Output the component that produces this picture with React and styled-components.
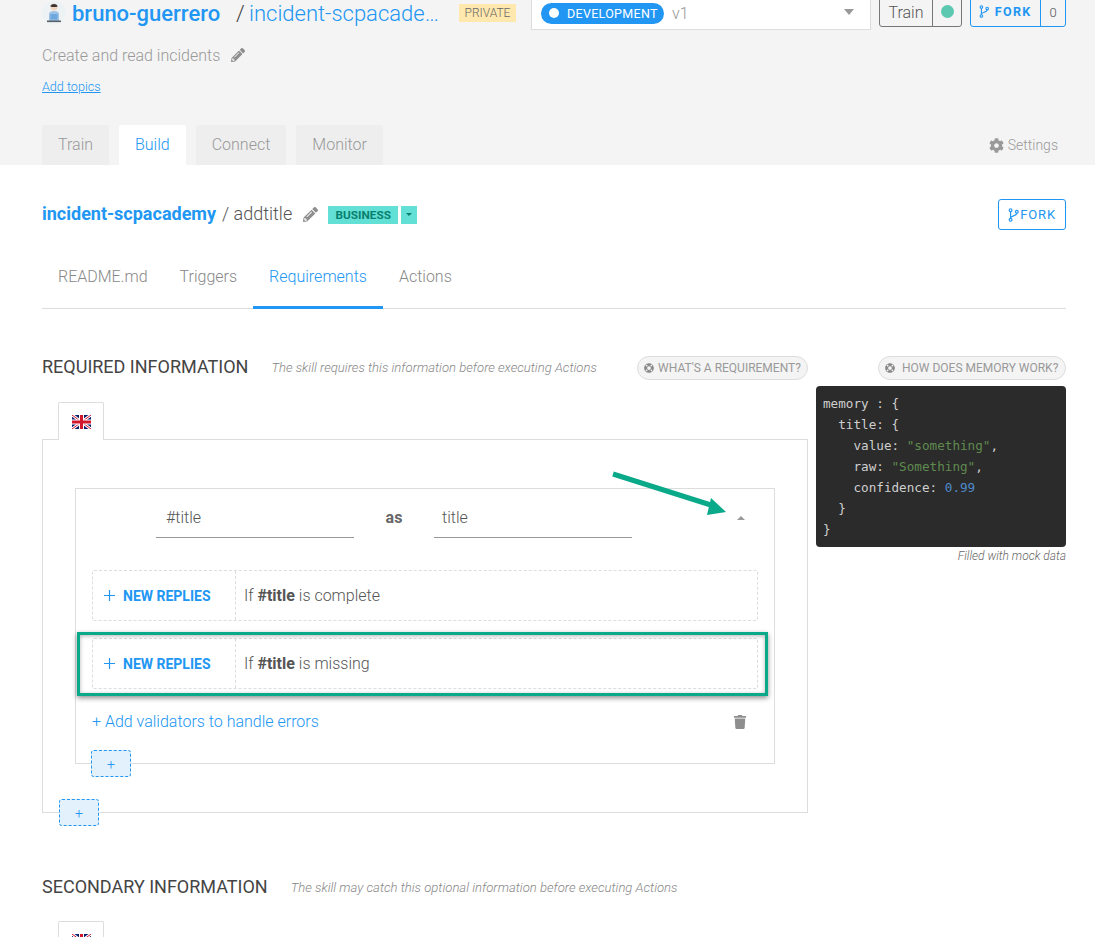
import React from 'react';
import styled, { createGlobalStyle } from 'styled-components';
import { FaCog, FaLifeRing, FaPencilAlt, FaTrash } from 'react-icons/fa';

const Global = createGlobalStyle`
  html, body { margin: 0; padding: 0; background: #fff; }
  * { box-sizing: border-box; }
  body { font-family: Roboto, "Noto Sans", sans-serif; color: #555; }
`;
const blue = '#2196f3';

const Page = styled.div`width: 1095px; height: 937px; overflow: hidden;`;
const Header = styled.header`
  height: 165px; background: #f4f4f4; padding: 0 29px 0 42px;
  display: flex; flex-direction: column;
`;
const TopRow = styled.div`display: flex; align-items: flex-start; height: 40px;`;
const Avatar = styled.svg`width: 24px; height: 24px; margin-top: 1px; margin-right: 6px; flex: none;`;
const Owner = styled.a`font-size: 22px; font-weight: 500; color: ${blue}; line-height: 27px; white-space: nowrap; width: 148px;`;
const Slash = styled.span`font-size: 22px; font-weight: 300; color: #444; line-height: 27px; margin: 0 7px 0 16px; width: 6px;`;
const Repo = styled.span`
  font-size: 22px; font-weight: 300; color: ${blue}; line-height: 27px;
  width: 198px; overflow: hidden; text-overflow: ellipsis; white-space: nowrap;
`;
const Private = styled.span`
  margin: 4px 0 0 12px; width: 57px; height: 18px; background: #ffe8ad; color: #666;
  font-size: 12px; font-weight: 300; display: flex; align-items: center; justify-content: center;
`;
const Select = styled.div`
  width: 340px; height: 41px; margin: -11px 0 0 15px; background: #fff; border: 1px solid #ddd;
  display: flex; align-items: center; padding: 7px 16px 0 9px; flex: none;
`;
const EnvPill = styled.span`
  height: 21px; width: 123px; background: ${blue}; color: #fff; border-radius: 11px; font-size: 12.5px;
  letter-spacing: .3px; display: flex; align-items: center; gap: 8px; padding-left: 8px;
  &::before { content: ''; width: 10px; height: 10px; border-radius: 50%; background: #fff; }
`;
const Version = styled.span`font-size: 16px; font-weight: 300; color: #999; margin-left: 8px; flex: 1;`;
const Caret = styled.span`
  width: 0; height: 0; border-left: 5px solid transparent; border-right: 5px solid transparent;
  border-top: 6px solid #999; margin-top: -2px;
`;
const TrainBtn = styled.div`
  width: 83px; height: 38px; margin: -11px 0 0 8px; border: 1px solid #777; border-radius: 3px;
  display: flex; flex: none;
`;
const TrainLabel = styled.span`
  width: 53px; padding-top: 8px; border-right: 1px solid #777;
  font-size: 16px; font-weight: 300; color: #555; display: flex; align-items: center; justify-content: center;
`;
const DotCell = styled.span`flex: 1; display: flex; align-items: center; justify-content: center; padding-top: 6px;`;
const Dot = styled.span`width: 13px; height: 13px; border-radius: 50%; background: #5cc8b2;`;
const ForkGroup = styled.div`
  width: 96px; height: 38px; margin: -11px 0 0 8px; border: 1px solid ${blue}; border-radius: 3px;
  display: flex; flex: none;
`;
const ForkMain = styled.span`
  width: 70px; border-right: 1px solid ${blue}; color: ${blue}; font-size: 12.5px; font-weight: 700; letter-spacing: 1.4px;
  display: flex; align-items: center; justify-content: center; gap: 5px; padding-top: 6px;
`;
const ForkCount = styled.span`flex: 1; display: flex; align-items: center; justify-content: center; padding-top: 8px; font-size: 13px; font-weight: 300; color: #555;`;
const Desc = styled.div`
  display: flex; align-items: center; gap: 11px; margin-top: 5px; height: 20px;
  font-size: 16px; font-weight: 300; color: #999;
`;
const Pencil = styled(FaPencilAlt)`color: #8e8e8e; font-size: 14px; flex: none;`;
const SkillPencil = styled(Pencil)`margin-left: 11px; font-size: 15px;`;
const Topics = styled.a`font-size: 12.6px; font-weight: 300; color: ${blue}; text-decoration: underline; margin-top: 15px; line-height: 14px;`;
const TabBar = styled.nav`display: flex; gap: 10px; margin-top: auto; align-items: flex-end; height: 40px;`;
const Tab = styled.a`
  height: 40px; padding: 0 16px 2px; background: ${p => (p.$active ? '#fff' : '#eee')}; color: ${p => (p.$active ? blue : '#999')};
  font-size: 16px; font-weight: 300; display: flex; align-items: center; border-radius: 2px 2px 0 0;
`;
const SettingsLink = styled.a`
  margin-left: auto; margin-right: 8px; margin-bottom: 12px; display: flex; align-items: center; gap: 4px;
  font-size: 14px; font-weight: 300; color: #999;
  svg { font-size: 15px; color: #999; }
`;

const Main = styled.main`padding: 34px 29px 0 42px;`;
const SkillRow = styled.div`display: flex; align-items: center; height: 31px;`;
const SkillOwner = styled.a`font-size: 18px; font-weight: 700; color: ${blue}; padding-bottom: 2px;`;
const SkillName = styled.span`font-size: 18px; font-weight: 300; color: #555; margin-left: 6px; padding-bottom: 2px;`;
const Badge = styled.span`
  margin-left: 10px; width: 70px; height: 18px; background: #62e0d6; color: #09806f; font-size: 11.8px; font-weight: 700;
  display: flex; align-items: center; justify-content: center;
`;
const BadgeCaret = styled.span`
  margin-left: 3px; width: 16px; height: 18px; background: #62e0d6; display: flex; align-items: center; justify-content: center;
  &::after { content: ''; border-left: 3px solid transparent; border-right: 3px solid transparent; border-top: 3px solid #09806f; }
`;
const SkillFork = styled.a`
  margin-left: auto; width: 68px; height: 31px; border: 1px solid ${blue}; border-radius: 3px; color: ${blue};
  font-size: 13px; letter-spacing: .9px; font-weight: 400; display: flex; align-items: center; justify-content: center; gap: 1px;
`;
const SubTabs = styled.nav`display: flex; height: 47px; margin-top: 32px; border-bottom: 1px solid #ddd;`;
const SubTab = styled.a`
  padding: 0 16px 18px; display: flex; align-items: center; font-size: 16px; font-weight: 300;
  color: ${p => (p.$active ? blue : '#888')}; height: 47px;
  ${p => p.$active && `border-bottom: 3px solid ${blue}; padding-bottom: 15px;`}
`;
const Columns = styled.div`display: flex; gap: 8px; margin-top: 47px; align-items: flex-start;`;
const Left = styled.div`width: 766px; flex: none;`;
const Right = styled.aside`width: 250px; flex: none;`;
const HeadRow = styled.div`display: flex; align-items: center; height: 24px;`;
const H2 = styled.h2`margin: 0; font-size: 18px; font-weight: 400; color: #444; white-space: nowrap; padding-bottom: 3px;`;
const Hint = styled.span`font-size: 13.1px; font-style: italic; font-weight: 300; color: #888; margin-left: 23px; white-space: nowrap; padding-bottom: 1px;`;
const HelpPill = styled.a`
  margin-left: auto; height: 24px; border: 1px solid #ddd; border-radius: 12px; background: #f4f4f4;
  font-size: 12px; color: #999; display: flex; align-items: center; justify-content: ${p => (p.$wide ? 'flex-start' : 'center')}; gap: ${p => p.$gap}px;
  width: ${p => p.$w}px; padding: 0 6px; white-space: nowrap;
  svg { font-size: 10px; color: #8a8a8a; flex: none; }
`;
const FlagTab = styled.div`
  width: 46px; height: 38px; margin: ${p => p.$top}px 0 -1px 16px; border: 1px solid #ddd; border-bottom: 0; border-radius: 2px 2px 0 0;
  background: #fff; position: relative; z-index: 1; display: flex; align-items: center; justify-content: center;
`;
const Flag = styled.svg`width: 19px; height: 14px;`;
const Panel = styled.div`position: relative; border: 1px solid #ddd; padding: 48px 32px; height: 374px;`;
const Card = styled.div`position: relative; border: 1px solid #ddd; height: 276px; padding-top: 16px;`;
const FieldRow = styled.div`display: flex; align-items: flex-start; padding-left: 80px; height: 33px;`;
const Field = styled.div`
  width: 198px; height: 33px; border-bottom: 1px solid #999; font-size: 16px; font-weight: 300; color: #555;
  padding: 3px 0 0 ${p => p.$pad}px; line-height: 20px;
`;
const As = styled.b`width: 80px; text-align: center; font-size: 16px; font-weight: 700; color: #666; line-height: 26px;`;
const UpCaret = styled.span`
  margin: 11px 0 0 105px; border-left: 4px solid transparent; border-right: 4px solid transparent; border-bottom: 4px solid #999;
`;
const Replies = styled.div`display: flex; flex-direction: column; gap: 17px; margin: 32px 16px 0;`;
const ReplyRow = styled.div`position: relative; height: 51px; border: 1px dashed #ddd; border-radius: 2px; display: flex; align-items: center;`;
const NewReply = styled.a`
  width: 143px; height: 100%; border-right: 1px dashed #ddd; display: flex; align-items: center; gap: 7px; padding-left: 10px;
  font-size: 14px; font-weight: 700; color: ${blue}; white-space: nowrap;
`;
const PlusIcon = styled.svg`width: 13px; height: 13px; flex: none;`;
const Condition = styled.span`margin-left: 8px; font-size: 16px; font-weight: 300; color: #555; b { font-weight: 700; }`;
const Highlight = styled.div`
  position: absolute; left: -16px; right: -11px; top: -7px; bottom: -8px; border: 3px solid #0aa98a; pointer-events: none;
  box-shadow: 0 2px 5px rgba(0,0,0,.45), inset 0 1px 4px rgba(0,0,0,.3);
`;
const ValidatorRow = styled.div`display: flex; align-items: center; justify-content: space-between; margin: 20px 27px 0 16px; height: 24px;`;
const Validators = styled.a`font-size: 16px; font-weight: 300; color: ${blue};`;
const Trash = styled(FaTrash)`font-size: 14px; color: #8e8e8e; margin-top: 2px;`;
const AddBtn = styled.button`
  position: absolute; left: ${p => p.$left}px; bottom: -14px; width: 40px; height: 27px; background: #e3f1fc; border: 1px dashed ${blue};
  border-radius: 3px; color: ${blue}; font: 300 14px Roboto, sans-serif; padding: 0; line-height: 1;
`;
const Arrow = styled.svg`position: absolute; left: 535px; top: -21px; width: 120px; height: 50px; overflow: visible;`;
const Code = styled.pre`
  margin: 6px 0 0; height: 161px; background: #2b2b2b; border-radius: 4px; padding: 7px 7px; color: #cfcfcf;
  font: 12.65px/21px "DejaVu Sans Mono", monospace;
`;
const Str = styled.span`color: #5f8a4f;`;
const Num = styled.span`color: #4f8ac9;`;
const Note = styled.div`text-align: right; font-size: 12px; font-style: italic; font-weight: 300; color: #666; margin-top: 2px; line-height: 14px;`;
const Secondary = styled.section`margin-top: 63px;`;

const ForkIcon = ({ size = 13 }) => (
  <svg width={size * 0.8} height={size} viewBox="0 0 10 13" fill="none" stroke="#2196f3" strokeWidth="1.1">
    <circle cx="2.2" cy="2" r="1.3" /><circle cx="2.2" cy="11" r="1.3" /><circle cx="8" cy="3.5" r="1.3" />
    <path d="M2.2 3.3v6.4M8 4.8c0 2.8-5.8 2.2-5.8 4.6" />
  </svg>
);
const Uk = () => (
  <Flag viewBox="0 0 19 14">
    <rect width="19" height="14" fill="#0b1d6e" />
    <path d="M0 0l19 14M19 0L0 14" stroke="#fff" strokeWidth="3" />
    <path d="M0 0l19 14M19 0L0 14" stroke="#d2162c" strokeWidth="1" />
    <path d="M9.5 0v14M0 7h19" stroke="#fff" strokeWidth="5" />
    <path d="M9.5 0v14M0 7h19" stroke="#d2162c" strokeWidth="3" />
  </Flag>
);
const Plus = () => (
  <PlusIcon viewBox="0 0 13 13"><path d="M6.5 1v11M1 6.5h11" stroke="#2196f3" strokeWidth="1.2" /></PlusIcon>
);

export default function App() {
  return (
    <Page>
      <Global />
      <Header>
        <TopRow>
          <Avatar viewBox="0 0 24 24">
            <circle cx="12" cy="12" r="12" fill="#edf2f4" />
            <circle cx="12" cy="6" r="3.4" fill="#f2d3bd" />
            <path d="M8.4 5.5c0-3.4 7.2-3.4 7.2 0-2 .7-5 .7-7.2 0z" fill="#3a3434" />
            <path d="M7 20v-7c0-2 2-3 5-3s5 1 5 3v7z" fill="#9cc3e6" />
            <rect x="8.5" y="13" width="7" height="5.5" fill="#6fa8dc" />
            <rect x="5" y="19.5" width="14" height="1.6" fill="#5a5f66" />
          </Avatar>
          <Owner>bruno-guerrero</Owner>
          <Slash>/</Slash>
          <Repo>incident-scpacademy</Repo>
          <Private>PRIVATE</Private>
          <Select>
            <EnvPill>DEVELOPMENT</EnvPill>
            <Version>v1</Version>
            <Caret />
          </Select>
          <TrainBtn><TrainLabel>Train</TrainLabel><DotCell><Dot /></DotCell></TrainBtn>
          <ForkGroup>
            <ForkMain><ForkIcon />FORK</ForkMain>
            <ForkCount>0</ForkCount>
          </ForkGroup>
        </TopRow>
        <Desc>Create and read incidents <Pencil /></Desc>
        <Topics>Add topics</Topics>
        <TabBar>
          <Tab>Train</Tab>
          <Tab $active>Build</Tab>
          <Tab>Connect</Tab>
          <Tab>Monitor</Tab>
          <SettingsLink><FaCog />Settings</SettingsLink>
        </TabBar>
      </Header>
      <Main>
        <SkillRow>
          <SkillOwner>incident-scpacademy</SkillOwner>
          <SkillName>/ addtitle</SkillName>
          <SkillPencil />
          <Badge>BUSINESS</Badge>
          <BadgeCaret />
          <SkillFork><ForkIcon size={14} />FORK</SkillFork>
        </SkillRow>
        <SubTabs>
          <SubTab>README.md</SubTab>
          <SubTab>Triggers</SubTab>
          <SubTab $active>Requirements</SubTab>
          <SubTab>Actions</SubTab>
        </SubTabs>
        <Columns>
          <Left>
            <HeadRow>
              <H2>REQUIRED INFORMATION</H2>
              <Hint>The skill requires this information before executing Actions</Hint>
              <HelpPill $w={171} $gap={4}><FaLifeRing />WHAT'S A REQUIREMENT?</HelpPill>
            </HeadRow>
            <FlagTab $top={22}><Uk /></FlagTab>
            <Panel>
              <Card>
                <FieldRow>
                  <Field $pad={10}>#title</Field>
                  <As>as</As>
                  <Field $pad={8}>title</Field>
                  <UpCaret />
                </FieldRow>
                <Arrow viewBox="0 0 120 50">
                  <path d="M2 6L103 38" stroke="#0aa98a" strokeWidth="5" />
                  <path d="M115 44L100 30L96 47z" fill="#0aa98a" />
                </Arrow>
                <Replies>
                  <ReplyRow>
                    <NewReply><Plus />NEW REPLIES</NewReply>
                    <Condition>If <b>#title</b> is complete</Condition>
                  </ReplyRow>
                  <ReplyRow>
                    <NewReply><Plus />NEW REPLIES</NewReply>
                    <Condition>If <b>#title</b> is missing</Condition>
                    <Highlight />
                  </ReplyRow>
                </Replies>
                <ValidatorRow>
                  <Validators>+ Add validators to handle errors</Validators>
                  <Trash />
                </ValidatorRow>
                <AddBtn $left={15}>+</AddBtn>
              </Card>
              <AddBtn $left={16}>+</AddBtn>
            </Panel>
            <Secondary>
              <HeadRow>
                <H2>SECONDARY INFORMATION</H2>
                <Hint>The skill may catch this optional information before executing Actions</Hint>
              </HeadRow>
              <FlagTab $top={21}><Uk /></FlagTab>
            </Secondary>
          </Left>
          <Right>
            <HelpPill $wide $w={188} $gap={7}><FaLifeRing />HOW DOES MEMORY WORK?</HelpPill>
            <Code>{`memory : {
  title: {
    value: `}<Str>"something"</Str>{`,
    raw: `}<Str>"Something"</Str>{`,
    confidence: `}<Num>0.99</Num>{`
  }
}`}</Code>
            <Note>Filled with mock data</Note>
          </Right>
        </Columns>
      </Main>
    </Page>
  );
}
